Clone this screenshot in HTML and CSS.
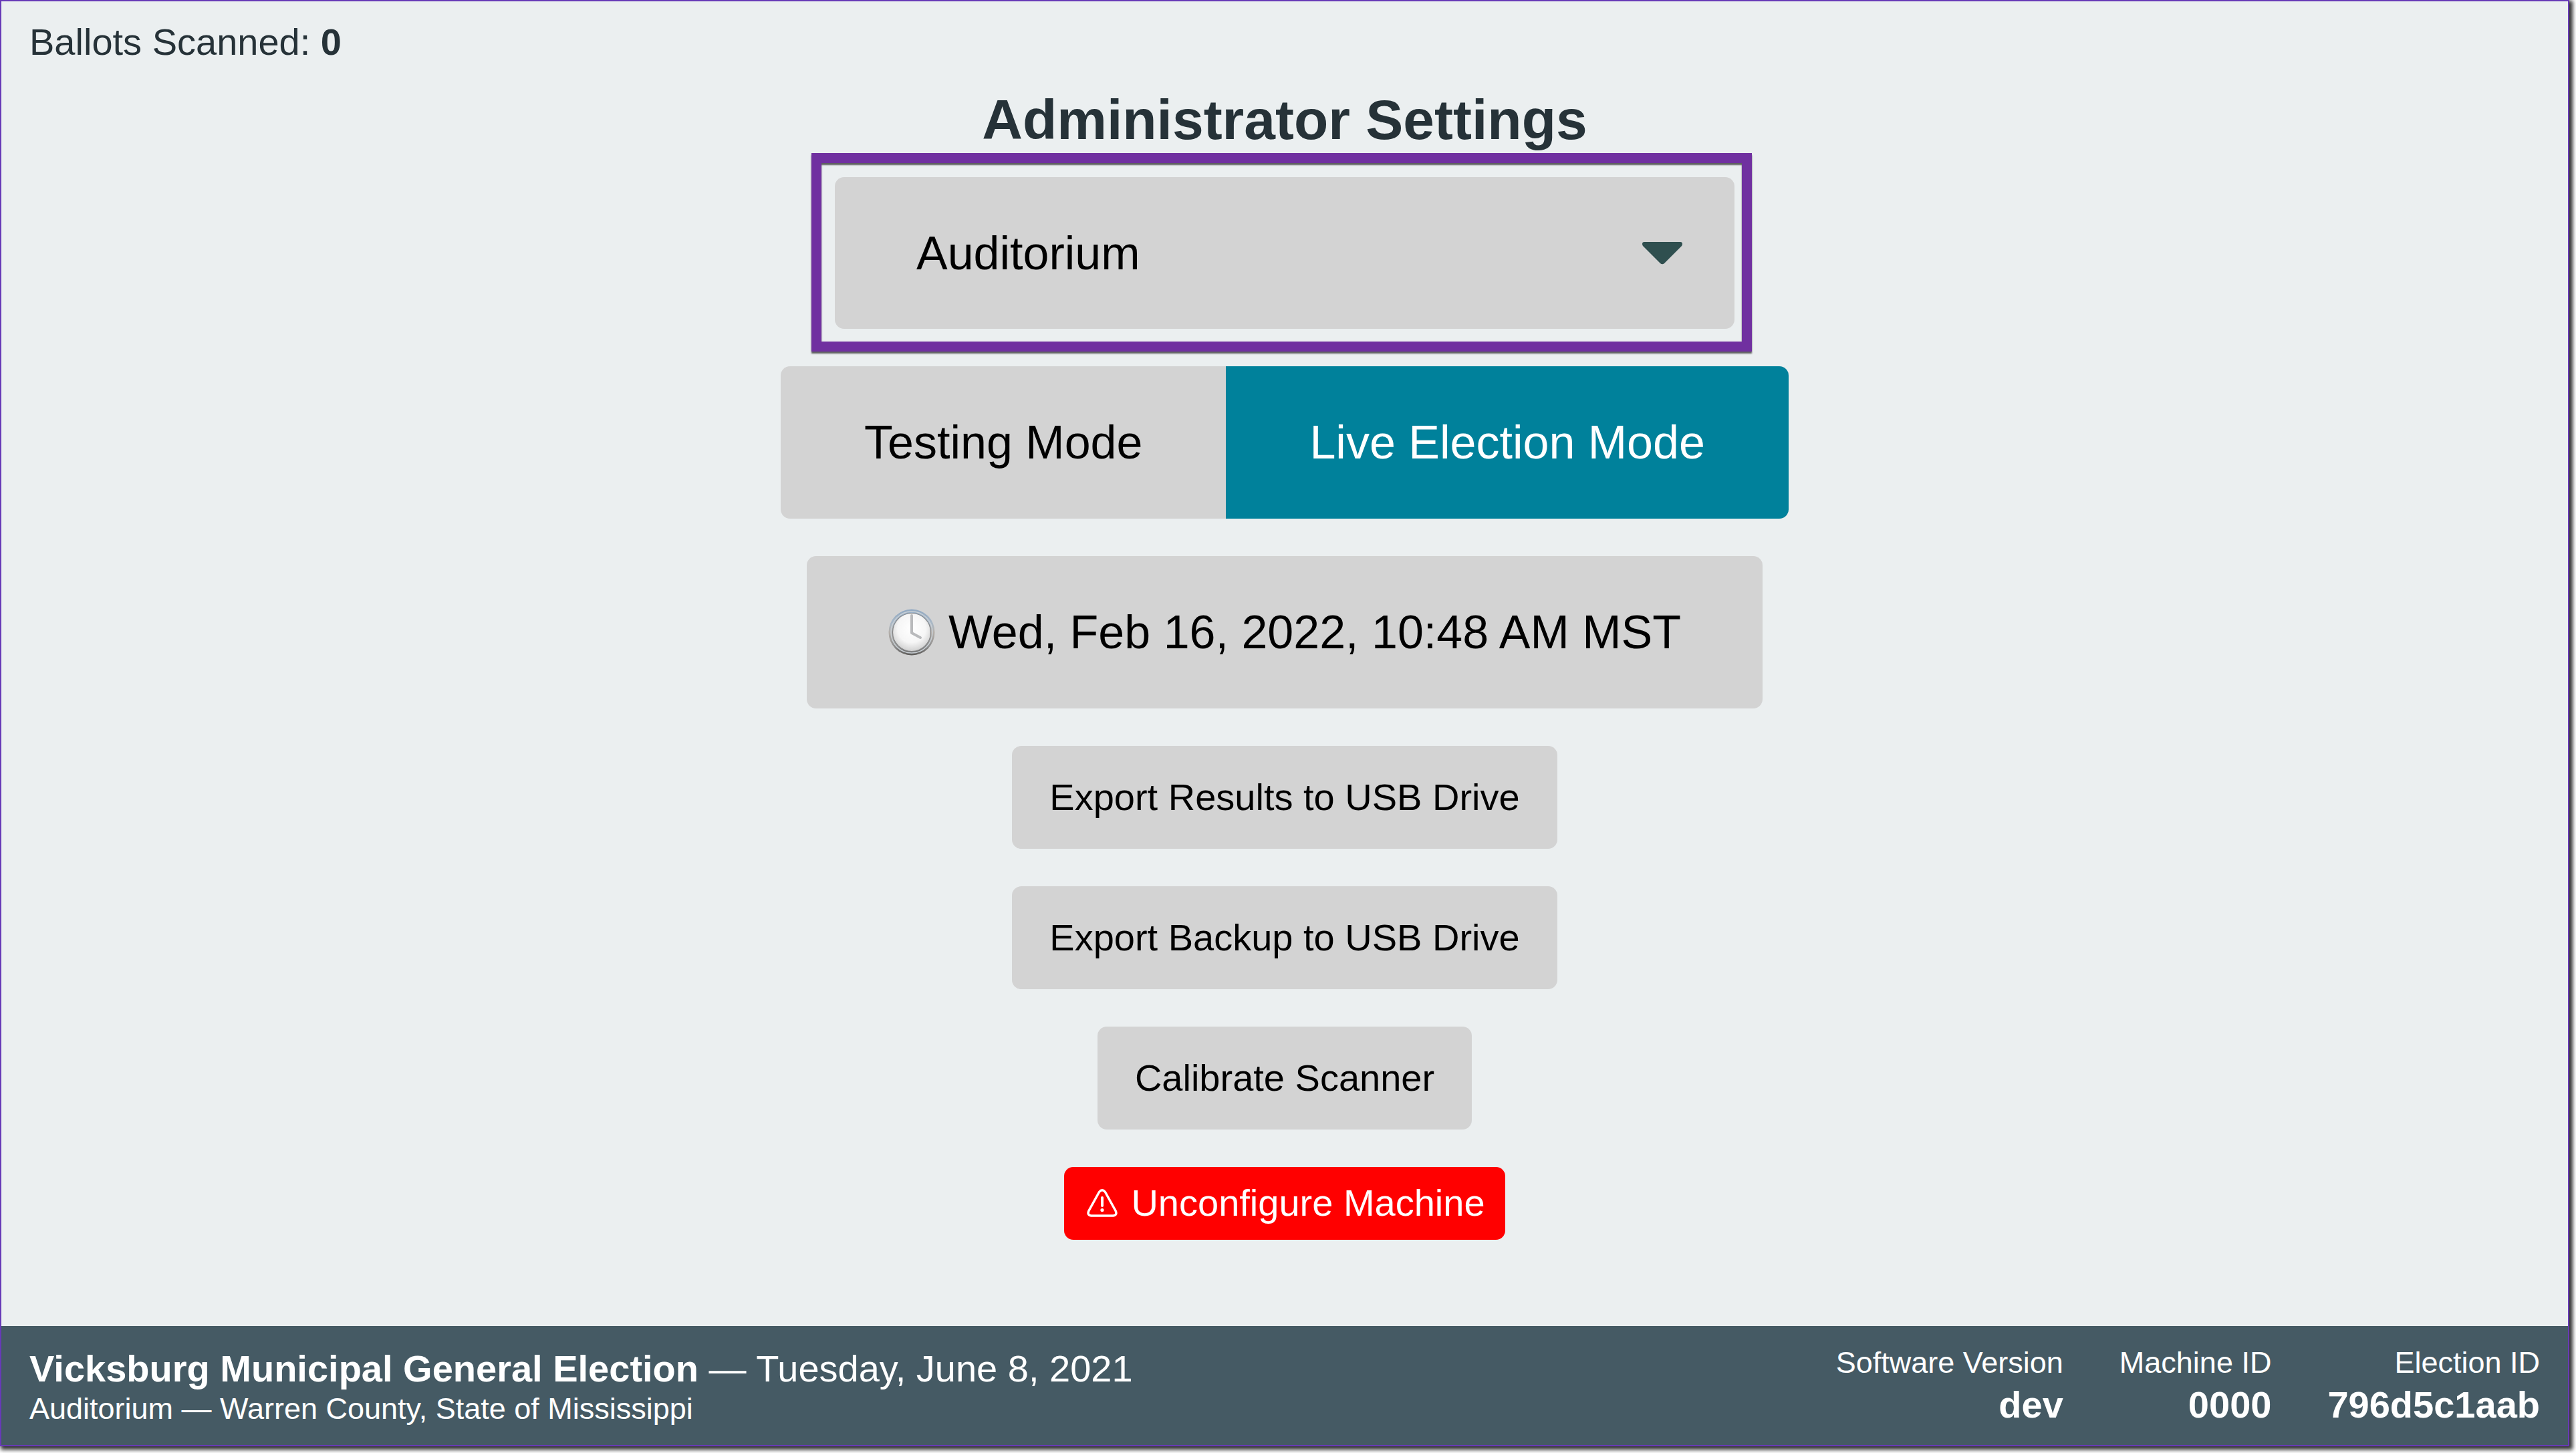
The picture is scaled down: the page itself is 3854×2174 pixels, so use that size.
FILE: index.html
```html
<!DOCTYPE html>
<html lang="en">
<head>
<meta charset="utf-8">
<meta name="viewport" content="width=device-width, initial-scale=1">
<title>Administrator Settings</title>
<link rel="stylesheet" href="styles.css">
</head>
<body>
<div class="screen">
  <header class="ballot-count">Ballots Scanned: <strong>0</strong></header>
  <main class="settings">
    <h1 class="title">Administrator Settings</h1>
    <div class="precinct">
      <select class="precinct-select" aria-label="Precinct">
        <option selected>Auditorium</option>
      </select>
      <svg class="caret" viewBox="0 0 60 34" aria-hidden="true"><path d="M3 0H57Q60 0 60 3Q60 5 58.500 6.500L33 32Q30 34.500 27 32L1.500 6.500Q0 5 0 3Q0 0 3 0Z" fill="#2f4f4f"/></svg>
      <span class="highlight"></span>
    </div>
    <div class="segmented" role="group" aria-label="Election mode">
      <button type="button" class="button large">Testing Mode</button>
      <button type="button" class="button large active" aria-pressed="true">Live Election Mode</button>
    </div>
    <button type="button" class="button large">
      <svg class="clock" viewBox="0 0 70 70" aria-hidden="true">
        <defs>
          <linearGradient id="rim" x1="0" y1="0" x2="0" y2="1">
            <stop offset="0" stop-color="#91a9c2"/>
            <stop offset=".3" stop-color="#a9b8c6"/>
            <stop offset=".5" stop-color="#b5b0ab"/>
            <stop offset=".8" stop-color="#8f8f8f"/>
            <stop offset="1" stop-color="#5c5a58"/>
          </linearGradient>
          <radialGradient id="face" cx=".5" cy=".4" r=".62">
            <stop offset="0" stop-color="#ffffff"/>
            <stop offset=".6" stop-color="#f6f6f6"/>
            <stop offset="1" stop-color="#cccccc"/>
          </radialGradient>
        </defs>
        <circle cx="35" cy="35" r="34.500" fill="url(#rim)"/>
        <circle cx="35" cy="35" r="31" fill="none" stroke="#c9d0d6" stroke-width="1.500"/>
        <circle cx="35" cy="35" r="28.500" fill="url(#face)" stroke="#858789" stroke-width="1.200"/>
        <path d="M35 10V36L48 43" fill="none" stroke="#b9babc" stroke-width="4" stroke-linecap="round" stroke-linejoin="round"/>
      </svg>
      <span>Wed, Feb 16, 2022, 10:48 AM MST</span>
    </button>
    <button type="button" class="button">Export Results to USB Drive</button>
    <button type="button" class="button">Export Backup to USB Drive</button>
    <button type="button" class="button">Calibrate Scanner</button>
    <button type="button" class="button danger">
      <svg class="warning" viewBox="0 0 46 42" fill="none" stroke="#fff" aria-hidden="true">
        <path d="M18.500 4.500Q23 -1 27.500 4.500L43 32.500Q46 39 39.500 40H6.500Q0 39 3 32.500Z" stroke-width="3.500" stroke-linejoin="round"/>
        <path d="M23 13V25" stroke-width="4" stroke-linecap="round"/>
        <circle cx="23" cy="31.500" r="2.600" fill="#fff" stroke="none"/>
      </svg>
      <span>Unconfigure Machine</span>
    </button>
  </main>
  <footer class="election-bar">
    <div class="election">
      <div class="election-name"><strong>Vicksburg Municipal General Election</strong> — Tuesday, June 8, 2021</div>
      <div class="election-place">Auditorium — Warren County, State of Mississippi</div>
    </div>
    <dl class="facts">
      <div><dt>Software Version</dt><dd>dev</dd></div>
      <div><dt>Machine ID</dt><dd>0000</dd></div>
      <div><dt>Election ID</dt><dd>796d5c1aab</dd></div>
    </dl>
  </footer>
</div>
</body>
</html>
```
FILE: styles.css
```css
* {
  box-sizing: border-box;
}

body {
  margin: 0;
  background: #fff;
  color: #263238;
  font-family: "Liberation Sans", Arial, Helvetica, sans-serif;
  font-size: 56px;
  line-height: 64px;
}

.screen {
  display: flex;
  flex-direction: column;
  min-height: calc(100vh - 10px);
  margin: 0 10px 10px 0;
  border: 2px solid #673ab7;
  background: #ebeff0;
  box-shadow: 3px 3px 6px 2px #000000d0;
}

.ballot-count {
  padding: 29px 42px 0;
}

.settings {
  flex: 1;
  display: flex;
  flex-direction: column;
  align-items: center;
  gap: 56px;
  padding: 34px 42px 56px;
}

.title {
  margin: 0 0 -20px;
  font-size: 84px;
  line-height: 100px;
}

.precinct {
  position: relative;
  width: 1346px;
  max-width: 100%;
}

.precinct-select {
  display: block;
  width: 100%;
  height: 227px;
  padding: 0 122px;
  border: 0;
  border-radius: 14px;
  appearance: none;
  background: #d3d3d3;
  color: #000;
  font: inherit;
  font-size: 70px;
}

.caret {
  position: absolute;
  top: 97px;
  right: 78px;
  width: 60px;
  height: 34px;
  pointer-events: none;
}

/* Callout frame drawn around the precinct picker */
.highlight {
  position: absolute;
  inset: -36px -26px -34px -35px;
  border: 15px solid #7030a0;
  box-shadow: 0 3px 2px #00000099, inset 0 3px 2px #00000099;
  pointer-events: none;
}

.button {
  display: flex;
  align-items: center;
  justify-content: center;
  padding: 45px 56px;
  border: 0;
  border-radius: 14px;
  background: #d3d3d3;
  color: #000;
  font: inherit;
}

.button.large {
  padding: 72px 122px;
  font-size: 70px;
  line-height: 84px;
}

.segmented {
  display: flex;
}

.segmented .button {
  padding: 72px 125px;
}

.segmented .button:first-child {
  border-radius: 14px 0 0 14px;
}

.segmented .button:last-child {
  border-radius: 0 14px 14px 0;
}

.button.active {
  background: #00819b;
  color: #fff;
}

.button.danger {
  gap: 20px;
  padding: 22px 30px 23px 34px;
  background: #f00;
  color: #fff;
}

.clock {
  width: 70px;
  height: 70px;
  margin-right: 20px;
}

.warning {
  width: 46px;
  height: 42px;
}

.election-bar {
  display: flex;
  align-items: flex-end;
  justify-content: space-between;
  padding: 26px 42px;
  background: #455a64;
  color: #fff;
}

.election-place {
  font-size: 45px;
  line-height: 56px;
}

.facts {
  display: flex;
  gap: 84px;
  margin: 0;
  text-align: right;
}

.facts dt {
  font-size: 45px;
  line-height: 58px;
}

.facts dd {
  margin: 0;
  font-weight: bold;
  line-height: 68px;
}
```
